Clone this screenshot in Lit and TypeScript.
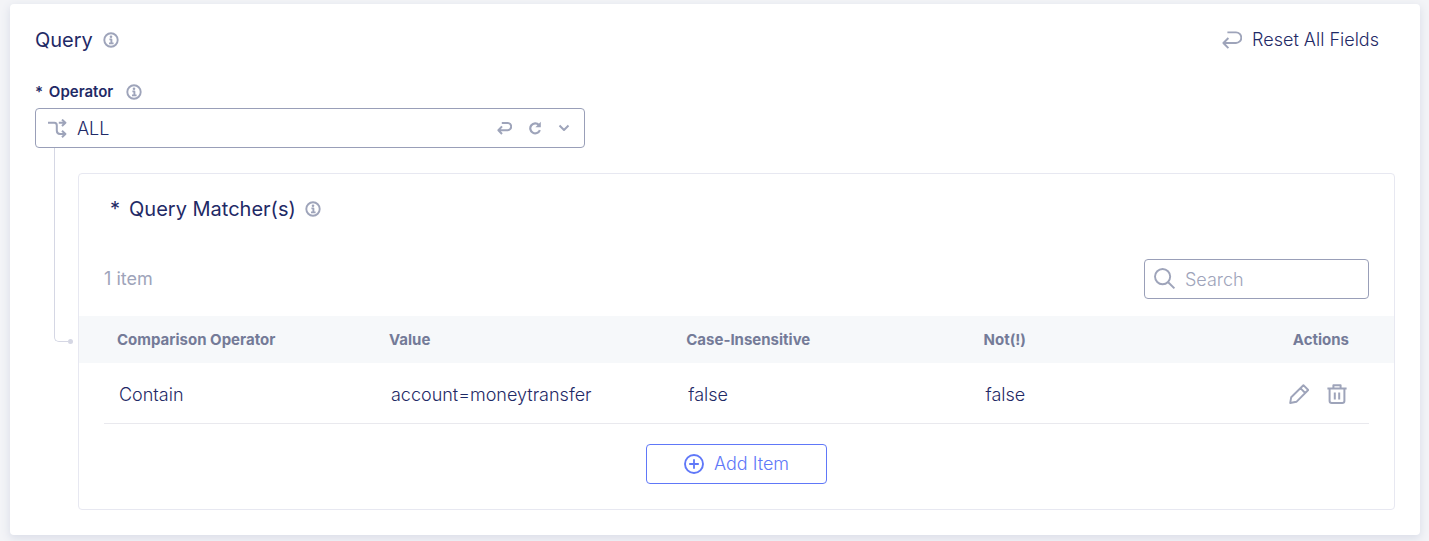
import { LitElement, html, css, svg } from "lit";
import { customElement, property, state } from "lit/decorators.js";

const glyphs: Record<string, unknown> = {
  info: svg`<circle cx="8" cy="8" r="6.7" stroke-width="1.9"/><path d="M6.4 7.4H8.4V11M6 11.4H10.6" stroke-width="1.9"/><circle cx="8" cy="4.8" r="1.3" fill="currentColor" stroke="none"/>`,
  reset: svg`<path d="M5.4 2.4H14A5.2 5.2 0 0 1 14 13H1.8M6.4 8L1.4 13L6.4 18.2" stroke-width="1.9"/>`,
  undo: svg`<path d="M4.8 2H10.6A3.6 3.6 0 0 1 10.6 9.2H1.6M5 5.4L1.4 9.2L5 13" stroke-width="2"/>`,
  refresh: svg`<path d="M10.9 3.9A5 5 0 1 0 11.9 9.2" stroke-width="2.2"/><path d="M12.8 .8V6.2H7.4Z" fill="currentColor" stroke="none"/>`,
  chevron: svg`<path d="M1.5 1.5L6 6L10.5 1.5" stroke-width="2"/>`,
  branch: svg`<path d="M0 3.8H6.4C8 3.8 8.8 4.8 8.8 6.4V11.6C8.8 14 10 15 12 15H17M10.8 3.8H17M14 .6L17.4 3.8L14 7M14 11.8L17.4 15L14 18.2" stroke-width="2"/>`,
  search: svg`<circle cx="8.6" cy="8.6" r="7.6" stroke-width="1.9"/><path d="M14.2 14.2L20.4 20.4" stroke-width="2"/>`,
  edit: svg`<path d="M1.2 19L2.2 13.2L14.4 1.2L19.2 6L7.4 17.8ZM11.4 4.2L16.2 9" stroke-width="1.9"/>`,
  trash: svg`<path d="M.4 4.6H19.6M6.4 4.4V1.2H13.6V4.4M2.6 4.8V17Q2.6 19 4.8 19H15.2Q17.4 19 17.4 17V4.8M7.8 8.4V15.4M12.2 8.4V15.4" stroke-width="2"/>`,
  plus: svg`<circle cx="10" cy="10" r="9" stroke-width="1.9"/><path d="M10 5.2V14.8M5.2 10H14.8" stroke-width="1.8"/>`,
};

const icon = (name: string, w: number, h: number) => html`<svg
  width=${w} height=${h} viewBox="0 0 ${w} ${h}" fill="none" stroke="currentColor"
  stroke-linejoin="round" aria-hidden="true">${glyphs[name]}</svg>`;

interface Matcher {
  operator: string;
  value: string;
  caseInsensitive: boolean;
  not: boolean;
}

const base = css`
  * { box-sizing: border-box; }
  svg { display: block; flex: none; }
  button, input, select { font: inherit; color: inherit; margin: 0; }
  button { background: none; border: 0; padding: 0; cursor: pointer; }
  h2, h3 { margin: 0; font-size: 20px; line-height: 24px; font-weight: 400; }
  .hint { color: #9ea4ba; }
  .row { display: flex; align-items: center; }
`;

@customElement("matcher-panel")
export class MatcherPanel extends LitElement {
  @property({ attribute: false }) items: Matcher[] = [];
  @state() private query = "";

  static styles = [base, css`
    :host { display: block; border: 1px solid #e7e8f1; border-radius: 4px; padding: 23px 25px 25px; background: #fff; }
    .title { gap: 9px; padding-left: 6px; }
    .tools { justify-content: space-between; margin: 38px 0 17px; }
    .count { color: #9ea4ba; font-weight: 400; }
    .search { width: 225px; height: 40px; border: 1px solid #999fb8; border-radius: 4px; padding: 0 9px; gap: 9px; color: #9ea4ba; }
    .search input { flex: 1; min-width: 0; border: 0; outline: 0; padding: 2px 0 0; background: none; }
    .search input::placeholder { color: #9ea4ba; opacity: 1; }
    table { width: 100%; border-collapse: collapse; table-layout: fixed; }
    th { height: 47px; padding: 0 13px; text-align: left; font-size: 15px; font-weight: 700; color: #747b98; }
    thead tr { background: #f6f8fa; box-shadow: -25px 0 #f6f8fa, 25px 0 #f6f8fa; }
    td { height: 60px; padding: 4px 15px 0; border-bottom: 1px solid #e9e9ee; }
    .c1 { width: 21.5%; }
    .c2 { width: 23.5%; }
    th.end { text-align: right; padding-right: 20px; }
    td.end { padding: 2px 22px 0 0; }
    .actions { justify-content: flex-end; gap: 18px; color: #9ea4ba; }
    .foot { display: flex; justify-content: center; padding-top: 20px; }
    .add { display: flex; align-items: center; justify-content: center; gap: 10px; width: 181px; height: 40px; border: 1px solid #6078f8; border-radius: 4px; color: #6078f8; }
  `];

  render() {
    const rows = this.items.filter((m) => m.value.includes(this.query));
    return html`
      <h3 class="row title"><span>*</span><span>Query Matcher(s)</span>
        <span class="hint">${icon("info", 16, 16)}</span></h3>
      <div class="row tools">
        <span class="count">${this.items.length} item</span>
        <label class="row search">${icon("search", 22, 22)}
          <input type="text" placeholder="Search" aria-label="Search"
            @input=${(e: Event) => (this.query = (e.target as HTMLInputElement).value)} />
        </label>
      </div>
      <table>
        <thead><tr>
          <th class="c1">Comparison Operator</th><th class="c2">Value</th>
          <th class="c2">Case-Insensitive</th><th>Not(!)</th><th class="end">Actions</th>
        </tr></thead>
        <tbody>${rows.map((m) => html`<tr>
          <td>${m.operator}</td><td>${m.value}</td>
          <td>${String(m.caseInsensitive)}</td><td>${String(m.not)}</td>
          <td class="end"><div class="row actions">
            <button type="button" aria-label="Edit">${icon("edit", 20, 20)}</button>
            <button type="button" aria-label="Delete">${icon("trash", 20, 20)}</button>
          </div></td>
        </tr>`)}</tbody>
      </table>
      <div class="foot"><button type="button" class="add">${icon("plus", 20, 20)}<span>Add Item</span></button></div>
    `;
  }
}

@customElement("app-root")
export class AppRoot extends LitElement {
  @state() private items: Matcher[] = [
    { operator: "Contain", value: "account=moneytransfer", caseInsensitive: false, not: false },
  ];

  static styles = [base, css`
    :host { display: block; min-height: 100vh; box-sizing: border-box; padding: 4px 9px 6px 10px; background: #f3f4f7; color: #1f2a66; font: 300 18px/24px Inter, "Liberation Sans", sans-serif; }
    .card { background: #fff; border-radius: 4px; padding: 24px 25px 25px; box-shadow: 0 3px 9px 1px #dcdfe9; }
    .head { justify-content: space-between; }
    .title { gap: 10px; }
    .reset { gap: 10px; margin-right: 16px; }
    .label { gap: 13px; margin-top: 28px; font-size: 15px; font-weight: 600; }
    .star { padding-right: 2px; }
    .select { width: 42%; min-width: 320px; max-width: 550px; height: 40px; margin-top: 4px; padding: 0 14px 0 12px; border: 1px solid #999fb8; border-radius: 4px; gap: 16px; color: #9ea4ba; }
    .select select { flex: 1; min-width: 0; margin-left: -6px; border: 0; outline: 0; padding: 2px 0 0; background: none; appearance: none; color: #1f2a66; }
    .nest { display: grid; grid-template-columns: 43px minmax(0, 1fr); }
    .link { position: relative; width: 14px; height: calc(50% + 13px); margin-left: 19px; border: solid #d5d7e4; border-width: 0 0 1px 1px; border-bottom-left-radius: 5px; }
    .link::after { content: ""; position: absolute; right: -5px; bottom: -3px; width: 5px; height: 5px; border-radius: 50%; background: #d5d7e4; }
    matcher-panel { margin-top: 25px; }
  `];

  render() {
    return html`
      <section class="card">
        <div class="row head">
          <h2 class="row title">Query <span class="hint">${icon("info", 16, 16)}</span></h2>
          <button type="button" class="row reset"><span class="hint">${icon("reset", 20, 20)}</span>Reset All Fields</button>
        </div>
        <div class="row label"><label for="operator"><span class="star">*</span> Operator</label>
          <span class="hint">${icon("info", 16, 16)}</span></div>
        <div class="row select">
          ${icon("branch", 19, 19)}
          <select id="operator"><option>ALL</option><option>ANY</option></select>
          <button type="button" aria-label="Undo">${icon("undo", 15, 14)}</button>
          <button type="button" aria-label="Refresh">${icon("refresh", 14, 14)}</button>
          ${icon("chevron", 12, 8)}
        </div>
        <div class="nest">
          <div class="link"></div>
          <matcher-panel .items=${this.items}></matcher-panel>
        </div>
      </section>
    `;
  }
}
